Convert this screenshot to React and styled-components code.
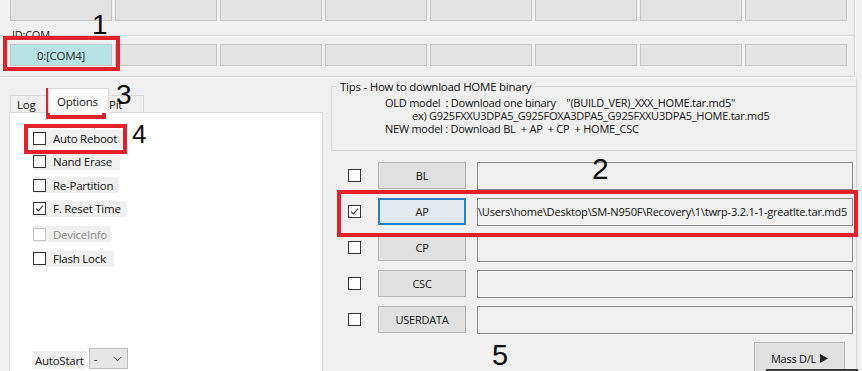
import React from 'react'
import styled, { createGlobalStyle } from 'styled-components'

const GlobalStyle = createGlobalStyle`
  html, body { margin: 0; padding: 0; background: #f0f0f0; }
  * { box-sizing: border-box; }
  body {
    font-family: "Open Sans", "Noto Sans", sans-serif;
    font-size: 11px;
    letter-spacing: -0.25px;
    color: #1b1b1b;
  }
`

const Window = styled.div`
  position: relative;
  width: 862px;
  height: 371px;
  overflow: hidden;
  background: #f0f0f0;
`

const Header = styled.div`
  width: 855px;
  height: 78px;
  border-right: 1px solid #d6d6d6;
  border-bottom: 1px solid #d6d6d6;
  box-shadow: 1px 1px 0 #fbfbfb;
`

const SlotRow = styled.div`
  display: flex;
  gap: 3px;
  padding-left: 10px;
  margin-top: ${p => p.$top || 0}px;
`

const Slot = styled.div`
  width: 102px;
  height: 22px;
  border: 1px solid #c6c6c6;
  background: ${p => (p.$active ? '#b8e3e4' : '#e3e3e3')};
  display: flex;
  align-items: center;
  justify-content: center;
  color: #1e2a2a;
  font-size: 11.5px;
`

const ComGroup = styled.div`
  margin-top: 14px;
  border-top: 1px solid #d9d9d9;
  box-shadow: inset 0 1px 0 #fafafa;
`

const ComLabel = styled.div`
  margin: -8px 0 0 12px;
  height: 14px;
  line-height: 14px;
  font-size: 11px;
  color: #222;
`

const Main = styled.div`
  display: flex;
`

const LeftCol = styled.div`
  width: 314px;
  margin-left: 9px;
  padding-top: 11px;
  display: flex;
  flex-direction: column;
`

const TabStrip = styled.div`
  display: flex;
  align-items: flex-end;
  height: 24px;
  padding-left: 1px;
`

const Tab = styled.div`
  height: ${p => (p.$selected ? 25 : 18)}px;
  width: ${p => p.$w}px;
  padding-left: ${p => p.$pl}px;
  margin: 0 ${p => (p.$selected ? -2 : 0)}px -1px;
  background: ${p => (p.$selected ? '#fff' : '#f0f0f0')};
  border: 1px solid #d9d9d9;
  border-bottom: ${p => (p.$selected ? 'none' : '1px solid #d9d9d9')};
  position: relative;
  z-index: ${p => (p.$selected ? 1 : 0)};
  display: flex;
  align-items: center;
  font-size: 11.5px;
  color: #111;
`

const TabPanel = styled.div`
  background: #fff;
  border: 1px solid #d9d9d9;
  height: 270px;
  padding: 17px 0 0 23px;
  display: flex;
  flex-direction: column;
  align-items: flex-start;
`

const CheckItem = styled.div`
  display: inline-flex;
  align-items: center;
  gap: 7px;
  height: 16px;
  padding-right: ${p => p.$pad || 4}px;
  margin-top: ${p => p.$mt || 0}px;
  margin-bottom: 7.5px;
  background: #f0f0f0;
  font-size: 11.5px;
  color: ${p => (p.$disabled ? '#8c8c8c' : '#111')};
`

const Box = styled.span`
  width: 13px;
  height: 13px;
  border: 1px solid ${p => (p.$disabled ? '#c4c4c4' : '#333')};
  background: #fff;
  display: flex;
  align-items: center;
  justify-content: center;
  flex: none;
`

const AutoRow = styled.div`
  display: flex;
  align-items: flex-end;
  gap: 3px;
  margin-top: 74px;
  margin-left: -1px;
`

const AutoLabel = styled.span`
  background: #f0f0f0;
  padding: 2px 2px 0 3px;
  height: 18px;
  font-size: 11.5px;
`

const Select = styled.div`
  width: 39px;
  height: 21px;
  border: 1px solid #bdbdbd;
  background: #e6e6e6;
  display: flex;
  align-items: center;
  justify-content: space-between;
  padding: 0 5px 0 4px;
  font-size: 11px;
`

const RightCol = styled.div`
  width: 534px;
  padding-left: 8px;
  border-right: 1px solid #d6d6d6;
  display: flex;
  flex-direction: column;
  height: 300px;
`

const Tips = styled.fieldset`
  margin: 2px 0 0;
  padding: 2px 0 0 0;
  height: 72px;
  border: 1px solid #d9d9d9;
  border-right: none;
  min-width: 0;
`

const TipsTitle = styled.legend`
  margin-left: 7px;
  padding: 0 2px 0 1px;
  font-size: 11.5px;
  color: #111;
`

const TipLine = styled.div`
  white-space: pre;
  line-height: 13px;
  font-size: 11px;
  color: #111;
  padding-left: ${p => 53 + (p.$indent || 0)}px;
`

const Rows = styled.div`
  margin-top: 11px;
  display: flex;
  flex-direction: column;
  gap: 9px;
  padding-left: 17px;
`

const FileRow = styled.div`
  display: flex;
  align-items: center;
  height: 27px;
`

const FileButton = styled.div`
  width: 88px;
  height: 27px;
  margin-left: 17px;
  background: ${p => (p.$focus ? '#e2e9ee' : '#e1e1e1')};
  border: ${p => (p.$focus ? '2px solid #2a7fc1' : '1px solid #b4b4b4')};
  display: flex;
  align-items: center;
  justify-content: center;
  font-size: 11px;
  color: #111;
`

const PathField = styled.div`
  width: 376px;
  height: 28px;
  margin-left: 11px;
  border: 1px solid #8a8a8a;
  background: #f0f0f0;
  display: flex;
  align-items: center;
  justify-content: flex-end;
  overflow: hidden;
  padding-right: 5px;
  white-space: nowrap;
  font-size: 11.1px;
  color: #111;
`

const MassButton = styled.div`
  align-self: flex-end;
  margin: 9px 11px 0 0;
  width: 91px;
  height: 32px;
  background: #e1e1e1;
  border: 1px solid #b4b4b4;
  display: flex;
  align-items: center;
  justify-content: center;
  gap: 4px;
  font-size: 11px;
  color: #111;
`

const Mark = styled.div`
  position: absolute;
  left: ${p => p.$x}px;
  top: ${p => p.$y}px;
  width: ${p => p.$w}px;
  height: ${p => p.$h}px;
  border: 4px solid #e2222b;
  pointer-events: none;
`

const Num = styled.div`
  position: absolute;
  left: ${p => p.$x}px;
  top: ${p => p.$y}px;
  font-family: "Liberation Sans", Arial, sans-serif;
  font-size: ${p => p.$s}px;
  letter-spacing: 0;
  line-height: 1;
  color: #0a0a0a;
`

const EdgeShadow = styled.div`
  position: absolute;
  left: 766px;
  top: 369px;
  width: 92px;
  height: 2px;
  background: #3a3a3a;
`

function Check({ checked, disabled }) {
  return (
    <Box $disabled={disabled}>
      {checked && (
        <svg width="9" height="9" viewBox="0 0 9 9">
          <path d="M1 4.6 L3.4 7 L8 1.6" fill="none" stroke="#333" strokeWidth="1.1" />
        </svg>
      )}
    </Box>
  )
}

const options = [
  { label: 'Auto Reboot', pad: 6 },
  { label: 'Nand Erase', pad: 8 },
  { label: 'Re-Partition', pad: 6 },
  { label: 'F. Reset Time', checked: true, pad: 6 },
  { label: 'DeviceInfo', disabled: true, pad: 4, mt: 2 },
  { label: 'Flash Lock', pad: 8, mt: 1 },
]

const files = [
  { name: 'BL' },
  { name: 'AP', checked: true, focus: true, path: 'C:\\Users\\home\\Desktop\\SM-N950F\\Recovery\\1\\twrp-3.2.1-1-greatlte.tar.md5' },
  { name: 'CP' },
  { name: 'CSC' },
  { name: 'USERDATA' },
]

export default function App() {
  return (
    <Window>
      <GlobalStyle />
      <Header>
        <SlotRow $top={-1}>
          {Array.from({ length: 8 }).map((_, i) => <Slot key={i} />)}
        </SlotRow>
        <ComGroup>
          <ComLabel>ID:COM</ComLabel>
          <SlotRow $top={2}>
            {Array.from({ length: 8 }).map((_, i) => (
              <Slot key={i} $active={i === 0}>{i === 0 ? '0:[COM4]' : ''}</Slot>
            ))}
          </SlotRow>
        </ComGroup>
      </Header>

      <Main>
        <LeftCol>
          <TabStrip>
            <Tab $w={40} $pl={6}>Log</Tab>
            <Tab $w={61} $pl={8} $selected>Options</Tab>
            <Tab $w={37} $pl={1}>Pit</Tab>
          </TabStrip>
          <TabPanel>
            {options.map(o => (
              <CheckItem key={o.label} $disabled={o.disabled} $pad={o.pad} $mt={o.mt}>
                <Check checked={o.checked} disabled={o.disabled} />
                {o.label}
              </CheckItem>
            ))}
            <AutoRow>
              <AutoLabel>AutoStart</AutoLabel>
              <Select>
                <span>-</span>
                <svg width="9" height="6" viewBox="0 0 9 6">
                  <path d="M0.5 0.8 L4.5 4.8 L8.5 0.8" fill="none" stroke="#555" strokeWidth="1" />
                </svg>
              </Select>
            </AutoRow>
          </TabPanel>
        </LeftCol>

        <RightCol>
          <Tips>
            <TipsTitle>Tips - How to download HOME binary</TipsTitle>
            <TipLine>{'OLD model  : Download one binary    "(BUILD_VER)_XXX_HOME.tar.md5"'}</TipLine>
            <TipLine $indent={27}>ex) G925FXXU3DPA5_G925FOXA3DPA5_G925FXXU3DPA5_HOME.tar.md5</TipLine>
            <TipLine>{'NEW model : Download BL  + AP  + CP  + HOME_CSC'}</TipLine>
          </Tips>
          <Rows>
            {files.map(f => (
              <FileRow key={f.name}>
                <Check checked={f.checked} />
                <FileButton $focus={f.focus}>{f.name}</FileButton>
                <PathField>{f.path && <span>{f.path}</span>}</PathField>
              </FileRow>
            ))}
          </Rows>
          <MassButton>
            Mass D/L
            <svg width="8" height="9" viewBox="0 0 8 9">
              <path d="M0 0 L8 4.5 L0 9 Z" fill="#222" />
            </svg>
          </MassButton>
        </RightCol>
      </Main>

      <Mark $x={3} $y={36} $w={117} $h={35} />
      <Mark $x={46} $y={88} $w={60} $h={31} />
      <Mark $x={24} $y={124} $w={103} $h={30} />
      <Mark $x={337} $y={190} $w={521} $h={47} />
      <Num $x={92} $y={11} $s={28}>1</Num>
      <Num $x={592} $y={154} $s={30}>2</Num>
      <Num $x={116} $y={81} $s={28}>3</Num>
      <Num $x={132} $y={121} $s={26}>4</Num>
      <Num $x={492} $y={341} $s={29}>5</Num>
      <EdgeShadow />
    </Window>
  )
}
